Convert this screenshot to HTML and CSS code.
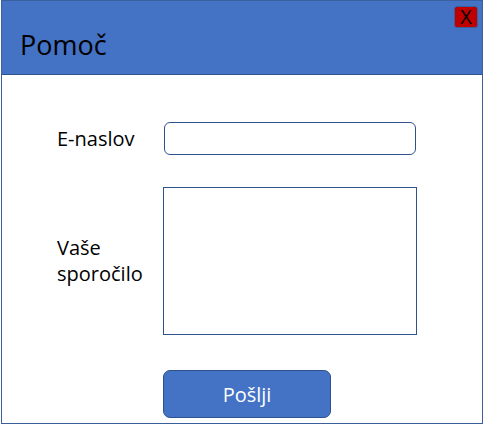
FILE: index.html
```html
<!DOCTYPE html>
<html lang="sl">
<head>
<meta charset="utf-8">
<title>Pomoč</title>
<link rel="stylesheet" href="styles.css">
</head>
<body>
<div class="dialog">
  <div class="header">
    <h1 class="title">Pomoč</h1>
    <button class="close" type="button">X</button>
  </div>
  <form class="form">
    <label class="label" for="email">E-naslov</label>
    <input class="input" id="email" type="text">
    <label class="label" for="msg">Vaše<br>sporočilo</label>
    <textarea class="textarea" id="msg"></textarea>
    <span></span>
    <button class="send" type="button">Pošlji</button>
  </form>
</div>
</body>
</html>
```

FILE: styles.css
```css
html, body {
  margin: 0;
  padding: 0;
  background: #ffffff;
}
body {
  font-family: "Open Sans", "Liberation Sans", sans-serif;
  width: 483px;
  height: 425px;
  overflow: hidden;
}
.dialog {
  box-sizing: border-box;
  margin-left: 1px;
  width: 482px;
  height: 424px;
  border: 1px solid #3b5f9c;
  display: flex;
  flex-direction: column;
  background: #fff;
}
.header {
  position: relative;
  box-sizing: border-box;
  height: 74px;
  background: #4472c4;
  border-bottom: 1px solid #2f528f;
  display: flex;
  align-items: flex-end;
}
.title {
  margin: 0 0 13px 18px;
  font-size: 27px;
  font-weight: 400;
  color: #000;
  line-height: 1.2;
}
.close {
  position: absolute;
  top: 5px;
  right: 4px;
  width: 24px;
  height: 22px;
  padding: 0;
  box-sizing: border-box;
  background: #c00000;
  border: 1px solid #3b5f9c;
  border-radius: 3px;
  color: #000;
  font-family: "Open Sans", "Liberation Sans", sans-serif;
  font-size: 20px;
  line-height: 20px;
}
.form {
  display: grid;
  grid-template-columns: 106px 254px;
  row-gap: 32px;
  padding: 47px 0 0 55px;
}
.label {
  font-size: 20px;
  line-height: 26px;
  color: #000;
  align-self: center;
}
.input {
  box-sizing: border-box;
  width: 252px;
  height: 33px;
  margin: 0 0 0 1px;
  border: 1px solid #2f528f;
  border-radius: 6px;
  background: #fff;
}
.textarea {
  box-sizing: border-box;
  width: 254px;
  height: 148px;
  margin: 0;
  border: 1px solid #2f528f;
  border-radius: 0;
  resize: none;
  background: #fff;
}
.send {
  box-sizing: border-box;
  margin-top: 3px;
  width: 168px;
  height: 48px;
  background: #4472c4;
  border: 1px solid #2f528f;
  border-radius: 7px;
  color: #fff;
  font-family: "Open Sans", "Liberation Sans", sans-serif;
  font-size: 20px;
  padding: 0;
}
```
